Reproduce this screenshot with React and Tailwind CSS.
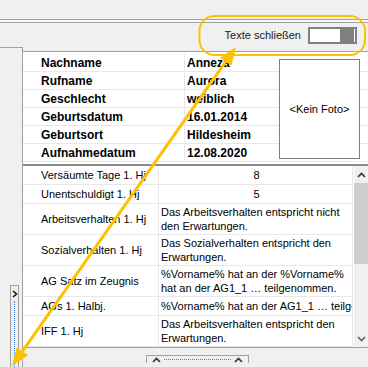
import React from "react";

const upper = [
  ["Nachname", "Anneza"],
  ["Rufname", "Aurora"],
  ["Geschlecht", "weiblich"],
  ["Geburtsdatum", "16.01.2014"],
  ["Geburtsort", "Hildesheim"],
  ["Aufnahmedatum", "12.08.2020"],
];

const lower = [
  { l: "Versäumte Tage 1. Hj", v: ["8"], h: "h-[19px]", c: true },
  { l: "Unentschuldigt 1. Hj", v: ["5"], h: "h-[19px]", c: true },
  { l: "Arbeitsverhalten 1. Hj", v: ["Das Arbeitsverhalten entspricht nicht", "den Erwartungen."], h: "h-[31px]" },
  { l: "Sozialverhalten 1. Hj", v: ["Das Sozialverhalten entspricht den", "Erwartungen."], h: "h-[31px]" },
  { l: "AG Satz im Zeugnis", v: ["%Vorname% hat an der %Vorname%", "hat an der AG1_1 … teilgenommen."], h: "h-[31px]" },
  { l: "AGs 1. Halbj.", v: ["%Vorname% hat an der AG1_1 … teilgenommen."], h: "h-[19px]" },
  { l: "IFF 1. Hj", v: ["Das Arbeitsverhalten entspricht den", "Erwartungen."], h: "h-[31px]" },
];

function ChevUp({ className = "" }) {
  return (
    <svg width="9" height="6" viewBox="0 0 9 6" className={className}>
      <polyline points="1,5 4.5,1.5 8,5" fill="none" stroke="#333" strokeWidth="1.6" />
    </svg>
  );
}
function ChevDown({ className = "" }) {
  return (
    <svg width="9" height="6" viewBox="0 0 9 6" className={className}>
      <polyline points="1,1 4.5,4.5 8,1" fill="none" stroke="#606060" strokeWidth="1.6" />
    </svg>
  );
}

export default function App() {
  return (
    <div className="relative w-[368px] h-[367px] overflow-hidden bg-[#f0f0f0] font-['Liberation_Sans',Arial,sans-serif] text-black">
      {/* top strip */}
      <div className="h-[19px]" />
      <div className="h-[1px] bg-[#a0a0a0]" />
      <div className="h-[2px] bg-[#f8f8f8]" />
      <div className="h-[1px] bg-[#a0a0a0]" />
      {/* toolbar */}
      <div className="h-[24px] flex items-center justify-end pr-[11px] gap-[7px]">
        <span className="text-[11px] text-[#1a1a1a] leading-none">Texte schließen</span>
        <div className="w-[49px] h-[17px] border-2 border-[#808080] bg-white flex justify-end items-center pr-[1px]">
          <div className="w-[14px] h-[13px] bg-[#808080]" />
        </div>
      </div>
      {/* body */}
      <div className="flex h-[320px]">
        {/* left panel */}
        <div className="w-[23px] border-t border-r border-[#a0a0a0] flex flex-col">
          <div className="flex-1" />
          <div className="ml-[10px] w-[9px] h-[82px] border border-b-0 border-[#a0a0a0] flex flex-col items-center pt-[4px]">
            <svg width="6" height="8" viewBox="0 0 6 8">
              <polyline points="1,1 4.5,4 1,7" fill="none" stroke="#111" strokeWidth="1.6" />
            </svg>
            <div className="mt-[3px] flex-1 border-l border-dotted border-[#3d7fe0]" />
          </div>
        </div>
        {/* main */}
        <div className="flex-1 flex flex-col pt-[4px]">
          <div className="border-t border-[#a0a0a0] bg-white flex flex-col">
            {/* upper */}
            <div className="relative pt-[2px] pb-[2px]">
              {upper.map(([l, v]) => (
                <div key={l} className="flex h-[18px] border-b border-[#e8e8e8]">
                  <div className="w-[162px] border-r border-[#e8e8e8] pl-[18px] flex items-center text-[12px] font-bold leading-none">
                    {l}
                  </div>
                  <div className="flex-1 pl-[2px] flex items-center text-[12px] font-bold leading-none">{v}</div>
                </div>
              ))}
              <div className="absolute left-[256px] top-[7px] w-[81px] h-[100px] border border-[#808080] bg-white flex items-center justify-center text-[11px] leading-none">
                &lt;Kein Foto&gt;
              </div>
            </div>
            <div className="h-[2px] bg-[#8c8c8c]" />
            {/* lower */}
            <div className="flex h-[181px]">
              <div className="w-[330px] flex flex-col">
                {lower.map((r) => (
                  <div key={r.l} className={`flex ${r.h} border-b border-[#e8e8e8]`}>
                    <div className="w-[136px] border-r border-[#e8e8e8] pl-[18px] flex items-center text-[11px] leading-none">
                      {r.l}
                    </div>
                    <div
                      className={`w-[194px] border-r border-[#e8e8e8] pl-[2px] flex flex-col justify-center overflow-hidden whitespace-nowrap text-[11px] leading-[14px] ${
                        r.c ? "items-center" : ""
                      }`}
                    >
                      {r.v.map((t) => (
                        <span key={t}>{t}</span>
                      ))}
                    </div>
                  </div>
                ))}
              </div>
              <div className="w-[1px]" />
              <div className="w-[14px] flex flex-col bg-[#f0f0f0]">
                <div className="h-[17px] flex items-center justify-center">
                  <ChevUp />
                </div>
                <div className="h-[81px] bg-[#cdcdcd]" />
                <div className="flex-1" />
                <div className="h-[17px] flex items-center justify-center">
                  <ChevDown />
                </div>
              </div>
            </div>
          </div>
          {/* bottom bar */}
          <div className="h-[20px] border-t border-[#a0a0a0] pt-[7px] pl-[123px]">
            <div className="w-[103px] h-[8px] border border-[#a0a0a0] border-b-0 flex items-center px-[5px] gap-[3px]">
              <ChevUp />
              <div className="flex-1 border-t border-dotted border-[#3d7fe0]" />
              <ChevUp />
            </div>
          </div>
        </div>
      </div>

      {/* annotation overlay */}
      <svg className="absolute left-0 top-0 pointer-events-none" width="368" height="367" viewBox="0 0 368 367">
        <rect x="199.5" y="16" width="165.5" height="39" rx="15" fill="none" stroke="#FFC000" strokeWidth="2" />
        <line x1="225.66" y1="61.73" x2="22.4" y2="351.3" stroke="#FFC000" strokeWidth="3" />
        <polygon points="236,47 231.39,65.75 219.93,57.71" fill="#FFC000" />
        <polygon points="12,366 16.67,347.28 28.13,355.32" fill="#FFC000" />
      </svg>
    </div>
  );
}
